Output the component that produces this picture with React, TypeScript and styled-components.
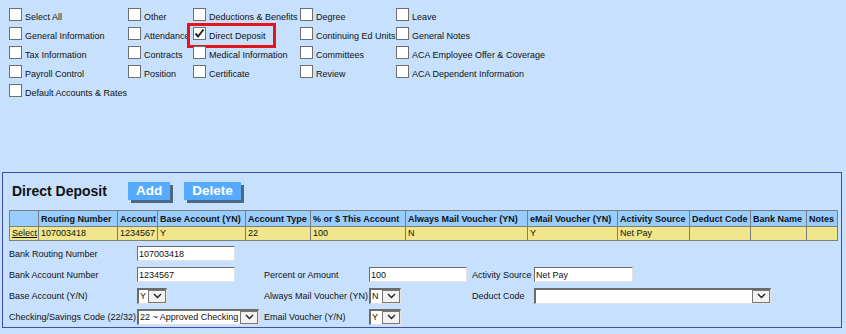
import React from "react";
import styled, { createGlobalStyle } from "styled-components";

const GlobalStyle = createGlobalStyle`
  html, body { margin: 0; padding: 0; background: #c6e0fe; }
  body { font-family: "Liberation Sans", Arial, sans-serif; font-size: 9px; color: #111; }
  * { box-sizing: border-box; }
`;

const Page = styled.div`
  width: 846px;
  height: 334px;
  overflow: hidden;
  background: #c6e0fe;
  display: flex;
  flex-direction: column;
`;

const CheckGrid = styled.div`
  display: grid;
  grid-template-columns: 119px 65px 107px 96px auto;
  grid-auto-rows: 13px;
  row-gap: 6px;
  padding: 8px 0 0 9px;
  height: 172px;
  align-content: start;
`;

const CheckItem = styled.label`
  position: relative;
  display: flex;
  align-items: flex-end;
  gap: 3px;
  white-space: nowrap;
`;

const Box = styled.span`
  flex: none;
  width: 13px;
  height: 13px;
  border: 1px solid #6e6e6e;
  background: #fff;
  display: flex;
  align-items: center;
  justify-content: center;
`;

const CheckText = styled.span`
  line-height: 8px;
`;

const RedFrame = styled.span`
  position: absolute;
  left: -6px;
  top: -4px;
  width: 89px;
  height: 25px;
  border: 3px solid #e3141c;
  pointer-events: none;
`;

const Panel = styled.section`
  margin: 0 4px 0 2px;
  height: 156px;
  border: 1px solid #3f4eae;
  padding: 8px 4px 0 6px;
  display: flex;
  flex-direction: column;
`;

const HeadRow = styled.div`
  display: flex;
  align-items: flex-start;
  height: 24px;
  padding-left: 3px;
`;

const Title = styled.h2`
  margin: 1px 0 0 0;
  font-size: 14px;
  line-height: 18px;
  font-weight: bold;
  color: #111;
`;

const Button = styled.button<{ $ml: number }>`
  margin: 1px 0 0 ${(p) => p.$ml}px;
  height: 18px;
  padding: 0 8px;
  border: none;
  background: #57abff;
  color: #fff;
  font-family: "Liberation Sans", Arial, sans-serif;
  font-weight: bold;
  font-size: 13.5px;
  line-height: 18px;
  box-shadow: 3px 3px 0 #4f6882;
  cursor: pointer;
`;

const Table = styled.table`
  margin-top: 6px;
  width: 828px;
  border-collapse: collapse;
  table-layout: fixed;
  border: 1px solid #7d7d7d;
`;

const Th = styled.th`
  height: 16px;
  padding: 0 2px;
  background: #99ccff;
  border: 1px solid #7d7d7d;
  font-size: 9px;
  font-weight: bold;
  text-align: left;
  white-space: nowrap;
  overflow: hidden;
  line-height: 14px;
`;

const Td = styled.td`
  height: 14px;
  padding: 0 2px;
  background: #f0e68c;
  border: 1px solid #7d7d7d;
  font-size: 9px;
  white-space: nowrap;
  overflow: hidden;
  line-height: 13px;
`;

const SelectLink = styled.a`
  color: #111;
  text-decoration: underline;
`;

const FormGrid = styled.div`
  margin-top: 2px;
  display: grid;
  grid-template-columns: 128px 127px 105px 103px 62px 1fr;
  grid-auto-rows: 21px;
  align-items: center;
`;

const Label = styled.span`
  white-space: nowrap;
  line-height: 15px;
  padding-top: 1px;
`;

const TextInput = styled.input<{ $w: number }>`
  width: ${(p) => p.$w}px;
  height: 15px;
  padding: 1px 1px 0;
  border: 1px solid;
  border-color: #6b6b6b #e2e2e2 #e2e2e2 #6b6b6b;
  background: #fff;
  font-family: "Liberation Sans", Arial, sans-serif;
  font-size: 9px;
  color: #111;
  outline: none;
`;

const SelectBox = styled.div<{ $w: number }>`
  width: ${(p) => p.$w}px;
  height: 16px;
  display: flex;
  align-items: stretch;
  background: #fff;
  border-style: solid;
  border-width: 2px 1px 1px 2px;
  border-color: #6b6b6b #e2e2e2 #e2e2e2 #6b6b6b;
`;

const SelectValue = styled.span`
  flex: 1;
  min-width: 0;
  overflow: hidden;
  white-space: nowrap;
  padding-left: 1px;
  line-height: 13px;
`;

const SelectButton = styled.span`
  flex: none;
  width: 18px;
  border: 1px solid #777;
  background: #f2f2f2;
  display: flex;
  align-items: center;
  justify-content: center;
`;

const Chevron = () => (
  <svg width="9" height="6" viewBox="0 0 9 6">
    <polyline points="1,1 4.5,4.5 8,1" fill="none" stroke="#222" strokeWidth="1.4" />
  </svg>
);

const CheckMark = () => (
  <svg width="11" height="11" viewBox="0 0 11 11">
    <polyline points="1.5,5.5 4,8.5 9.5,1.5" fill="none" stroke="#222" strokeWidth="2" />
  </svg>
);

const Select = ({ w, value }: { w: number; value: string }) => (
  <SelectBox $w={w}>
    <SelectValue>{value}</SelectValue>
    <SelectButton>
      <Chevron />
    </SelectButton>
  </SelectBox>
);

type Item = { label: string; checked?: boolean; marked?: boolean };

const items: Item[] = [
  { label: "Select All" },
  { label: "Other" },
  { label: "Deductions & Benefits" },
  { label: "Degree" },
  { label: "Leave" },
  { label: "General Information" },
  { label: "Attendance" },
  { label: "Direct Deposit", checked: true, marked: true },
  { label: "Continuing Ed Units" },
  { label: "General Notes" },
  { label: "Tax Information" },
  { label: "Contracts" },
  { label: "Medical Information" },
  { label: "Committees" },
  { label: "ACA Employee Offer & Coverage" },
  { label: "Payroll Control" },
  { label: "Position" },
  { label: "Certificate" },
  { label: "Review" },
  { label: "ACA Dependent Information" },
  { label: "Default Accounts & Rates" },
];

const columns: { title: string; w: number }[] = [
  { title: "", w: 29 },
  { title: "Routing Number", w: 79 },
  { title: "Account", w: 40 },
  { title: "Base Account (YN)", w: 88 },
  { title: "Account Type", w: 65 },
  { title: "% or $ This Account", w: 95 },
  { title: "Always Mail Voucher (YN)", w: 122 },
  { title: "eMail Voucher (YN)", w: 90 },
  { title: "Activity Source", w: 72 },
  { title: "Deduct Code", w: 61 },
  { title: "Bank Name", w: 56 },
  { title: "Notes", w: 31 },
];

const row = ["107003418", "1234567", "Y", "22", "100", "N", "Y", "Net Pay", "", "", ""];

export default function App() {
  return (
    <Page>
      <GlobalStyle />
      <CheckGrid>
        {items.map((it) => (
          <CheckItem key={it.label}>
            <Box>{it.checked && <CheckMark />}</Box>
            <CheckText>{it.label}</CheckText>
            {it.marked && <RedFrame />}
          </CheckItem>
        ))}
      </CheckGrid>
      <Panel>
        <HeadRow>
          <Title>Direct Deposit</Title>
          <Button $ml={21}>Add</Button>
          <Button $ml={14}>Delete</Button>
        </HeadRow>
        <Table>
          <colgroup>
            {columns.map((c, i) => (
              <col key={i} style={{ width: c.w }} />
            ))}
          </colgroup>
          <thead>
            <tr>
              {columns.map((c, i) => (
                <Th key={i}>{c.title}</Th>
              ))}
            </tr>
          </thead>
          <tbody>
            <tr>
              <Td>
                <SelectLink href="#">Select</SelectLink>
              </Td>
              {row.map((v, i) => (
                <Td key={i}>{v}</Td>
              ))}
            </tr>
          </tbody>
        </Table>
        <FormGrid>
          <Label>Bank Routing Number</Label>
          <TextInput $w={98} readOnly value="107003418" />
          <span />
          <span />
          <span />
          <span />

          <Label>Bank Account Number</Label>
          <TextInput $w={98} readOnly value="1234567" />
          <Label>Percent or Amount</Label>
          <TextInput $w={98} readOnly value="100" />
          <Label>Activity Source</Label>
          <TextInput $w={99} readOnly value="Net Pay" />

          <Label>Base Account (Y/N)</Label>
          <Select w={30} value="Y" />
          <Label>Always Mail Voucher (YN)</Label>
          <Select w={32} value="N" />
          <Label>Deduct Code</Label>
          <Select w={237} value="" />

          <Label>Checking/Savings Code (22/32)</Label>
          <Select w={122} value="22 ~ Approved Checking" />
          <Label>Email Voucher (Y/N)</Label>
          <Select w={32} value="Y" />
          <span />
          <span />
        </FormGrid>
      </Panel>
    </Page>
  );
}
